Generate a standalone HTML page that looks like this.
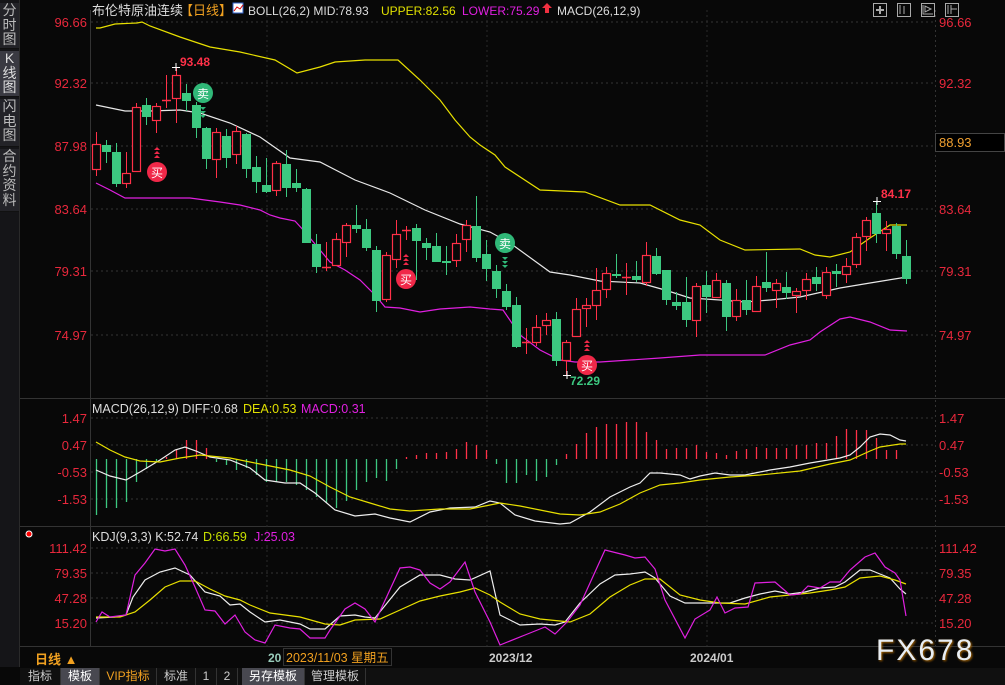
<!DOCTYPE html>
<html><head><meta charset="utf-8">
<style>
html,body{margin:0;padding:0;background:#080808;width:1005px;height:685px;overflow:hidden;font-family:"Liberation Sans","Noto Sans CJK SC",sans-serif}
svg{position:absolute;left:0;top:0}
.side{position:absolute;left:0;top:0;width:19px;height:667px;background:#151518;border-right:1px solid #2a2a2a}
.si{position:absolute;left:0;width:19px;color:#bbb;font-size:14px;line-height:14.5px;text-align:center;background:#232328;border-bottom:1px solid #111}
.tabs{position:absolute;left:20px;top:668px;width:985px;height:17px;background:#101010;font-size:12px;color:#ccc}
.tab{position:absolute;top:0;height:17px;line-height:17px;text-align:center;border-right:1px solid #333}
</style></head><body>
<div class="side">
<div class="si" style="top:3px;height:45px">分<br>时<br>图</div>
<div class="si" style="top:51px;height:45px;background:#3a3a42;color:#ddd">K<br>线<br>图</div>
<div class="si" style="top:99px;height:47px">闪<br>电<br>图</div>
<div class="si" style="top:149px;height:62px">合<br>约<br>资<br>料</div>
</div>
<svg id="s" width="1005" height="685" xmlns="http://www.w3.org/2000/svg"></svg>
<div class="tabs">
<div class="tab" style="left:0;width:40px">指标</div>
<div class="tab" style="left:41px;width:38px;background:#484850;color:#fff">模板</div>
<div class="tab" style="left:80px;width:56px;color:#f0a020">VIP指标</div>
<div class="tab" style="left:137px;width:38px">标准</div>
<div class="tab" style="left:176px;width:20px">1</div>
<div class="tab" style="left:197px;width:20px">2</div>
<div class="tab" style="left:222px;width:62px;background:#484850;color:#fff">另存模板</div>
<div class="tab" style="left:285px;width:60px">管理模板</div>
</div>
<script>
const s=document.getElementById('s');let h='';
function L(x1,y1,x2,y2,c,w,d){h+=`<line x1="${x1}" y1="${y1}" x2="${x2}" y2="${y2}" stroke="${c}" stroke-width="${w||1}" ${d?'stroke-dasharray="'+d+'"':''}/>`}
function T(x,y,t,c,sz,a,extra){h+=`<text x="${x}" y="${y}" fill="${c}" font-size="${sz||13}" ${a?'text-anchor="'+a+'"':''} ${extra||''}>${t}</text>`}
function P(pts,c){h+=`<polyline fill="none" stroke="${c}" stroke-width="1.2" points="${pts.join(' ')}"/>`}
L(20,398.5,1005,398.5,'#333',1);L(20,526.5,1005,526.5,'#333',1);L(20,646.5,1005,646.5,'#333',1);
L(90.5,10,90.5,646,'#333',1);L(935.5,10,935.5,646,'#333',1,'2,3');
[22,83,146,209,271,335].forEach(y=>L(91,y,935,y,'#333',1,'2,3'));
[418,445,472,499,548,573,598,623].forEach(y=>L(91,y,935,y,'#333',1,'2,3'));
[267,487,707].forEach(x=>L(x,10,x,646,'#2a2a2a',1,'2,3'));
const pl=[['96.66',22],['92.32',83],['87.98',146],['83.64',209],['79.31',271],['74.97',335]];
pl.forEach(p=>{T(87,p[1]+5,p[0],'#e8283c',13,'end');T(939,p[1]+5,p[0],'#e8283c',13)});
[['1.47',418],['0.47',445],['-0.53',472],['-1.53',499]].forEach(p=>{T(87,p[1]+5,p[0],'#e8283c',13,'end');T(939,p[1]+5,p[0],'#e8283c',13)});
[['111.42',548],['79.35',573],['47.28',598],['15.20',623]].forEach(p=>{T(87,p[1]+5,p[0],'#e8283c',13,'end');T(939,p[1]+5,p[0],'#e8283c',13)});
h+='<rect x="935.5" y="133.5" width="69" height="18" fill="#000" stroke="#444"/>';T(939,147,'88.93','#f0a030',13);
P(['96,105','125,111','150,111','180,110','200,113','230,123','260,137','290,158','320,162','355,180','390,193','425,210','460,224','490,232','510,243','550,272','570,275','600,281','640,283','665,290','690,298','720,300','745,302','770,300','800,297','840,288','870,283','907,277'],'#e8e8e8');
P(['96,28','100,28','115,24','137,23','142,22','150,26','180,37','210,47','240,52','275,60','297,73','320,67','335,62','365,60','398,60','420,80','440,100','455,120','470,137','480,145','495,155','505,167','540,190','585,192','620,205','650,205','680,220','700,225','720,240','745,250','800,249','815,255','830,257','850,252','870,238','890,225','907,225'],'#e8e000');
P(['96,183','110,190','125,198','150,198','190,198','205,200','220,202','240,205','260,210','270,215','280,218','295,221','305,232','320,250','330,262','345,270','360,280','375,295','385,307','400,308','420,312','440,309','470,307','490,309','503,310','520,335','540,350','560,360','575,362','600,362','630,360','660,358','700,355','765,355','790,345','810,340','820,332','840,319','850,317','870,322','890,330','907,331'],'#e020e0');
const C=[['r',144,169,132,176],['g',145,152,140,163],['g',152,184,143,187],['r',173,183,152,188],['r',107,171,103,171],['g',105,117,98,125],['r',106,120,103,133],['r',100,100,75,108],['r',75,98,67,123],['g',93,101,84,111],['g',105,128,102,138],['g',128,159,127,169],['r',132,159,128,178],['g',136,158,129,168],['r',131,154,126,164],['g',134,169,133,178],['g',167,182,156,193],['g',185,192,158,193],['r',163,190,161,196],['g',164,188,150,197],['g',183,188,169,192],['g',189,243,188,243],['g',244,267,234,273],['r',267,267,242,271],['r',239,265,233,265],['r',225,242,223,257],['g',225,229,205,233],['g',229,248,219,251],['g',250,301,246,312],['r',255,299,252,302],['r',234,259,220,268],['r',230,230,226,240],['g',228,241,224,280],['g',243,248,238,260],['g',246,262,233,262],['g',261,263,246,275],['r',243,260,234,267],['r',225,239,220,252],['g',226,258,196,262],['g',254,269,240,281],['g',271,289,265,298],['g',291,307,284,310],['g',305,347,297,348],['r',342,342,328,354],['r',327,342,315,346],['r',320,325,313,335],['g',319,361,312,366],['r',342,360,340,376],['r',309,336,298,337],['r',305,308,298,327],['r',290,305,268,320],['r',273,289,267,298],['g',274,276,254,278],['r',277,277,263,295],['g',276,280,261,282],['r',255,282,242,286],['g',256,274,248,275],['g',270,300,270,305],['g',302,306,292,310],['g',302,320,277,327],['r',286,320,283,337],['g',285,297,271,313],['r',280,297,273,298],['g',283,317,280,331],['r',300,316,289,321],['g',300,310,280,315],['r',286,311,276,311],['g',282,288,252,292],['r',283,290,279,308],['g',287,293,272,299],['r',291,295,288,313],['r',279,290,273,300],['g',277,284,267,291],['r',272,295,267,299],['g',271,274,264,287],['r',266,274,258,283],['r',237,264,233,268],['r',220,236,217,251],['g',213,234,202,243],['r',229,233,221,251],['g',226,254,223,259],['g',256,279,240,284]];
C.forEach((c,i)=>{const x=96+i*10.0;const col=c[0]=='r'?'#ff3048':'#3cc880';
 L(x+.5,c[3],x+.5,c[4],col,1);
 let bh=Math.max(1,c[2]-c[1]);
 if(c[0]=='r'){ if(c[2]-c[1]<2) L(x-4,c[1]+.5,x+5,c[1]+.5,col,1.5); else h+=`<rect x="${x-3.5}" y="${c[1]+.5}" width="8" height="${bh}" fill="#080808" stroke="${col}" stroke-width="1.2"/>`;}
 else h+=`<rect x="${x-4}" y="${c[1]}" width="9" height="${Math.max(2,bh)}" fill="${col}"/>`;
});
function M(x,y,t,col,up){h+=`<circle cx="${x}" cy="${y}" r="10" fill="${col}"/>`;T(x,y+5,t,'#fff',12,'middle');
 for(let k=0;k<3;k++){const yy=up?y-14-k*4:y+14+k*4;h+=up?`<path d="M${x-3} ${yy} L${x+3} ${yy} L${x} ${yy-3}Z" fill="${col}"/>`:`<path d="M${x-3} ${yy} L${x+3} ${yy} L${x} ${yy+3}Z" fill="${col}"/>`}}
M(203,93,'卖','#30b878',false);M(157,172,'买','#f02848',true);M(406,279,'买','#f02848',true);M(505,243,'卖','#30b878',false);M(587,365,'买','#f02848',true);
T(180,66,'93.48','#ff3048',12,null,'font-weight="bold"');T(881,198,'84.17','#ff3048',12,null,'font-weight="bold"');T(570,385,'72.29','#3cc880',12,null,'font-weight="bold"');
L(172,67.5,180,67.5,'#fff');L(176,63,176,71,'#fff');L(873,201.5,881,201.5,'#fff');L(877,197,877,205,'#fff');L(563,375.5,571,375.5,'#fff');L(567,371,567,379,'#fff');
const mh=[515,508,508,502,482,469,462,457,449,440,440,448,462,465,470,468,475,482,482,482,485,490,497,503,508,501,490,482,478,481,469,457,455,453,453,452,449,442,445,450,464,483,483,475,481,477,465,454,444,433,427,424,424,422,422,432,440,449,448,448,445,452,453,455,451,449,447,448,448,448,445,445,443,443,436,429,430,430,438,450,450];
mh.forEach((v,i)=>{const x=96+i*10+.5;L(x,459,x,v,v<459?'#ff3048':'#3cc880',1.3)});
P(['96,470','110,476','126,480','140,472','160,460','175,450','185,447','196,451','210,457','230,460','250,468','265,480','285,483','300,483','315,493','335,510','355,516','375,514','390,518','410,522','430,512','450,508','475,507','490,501','500,503','515,515','535,521','560,524','570,523','590,512','610,497','630,487','640,483','650,473','660,473','680,475','690,479','700,476','715,473','730,475','745,475','770,470','790,467','810,463','840,458','850,455','860,447','870,437','880,434','890,435','900,440','906,441'],'#eee');
P(['96,442','110,450','125,457','140,461','160,462','180,458','200,455','230,458','260,464','290,470','310,476','330,487','350,497','370,503','390,509','410,511','440,509','470,509','500,503','520,506','540,510','560,514','580,515','600,512','620,504','640,493','660,485','680,483','700,480','730,477','760,475','800,471','830,464','850,460','870,451','880,447','900,444','906,444'],'#e8e000');
P(['96,618','115,617','126,615','133,597','145,580','160,572','175,568','190,575','205,592','220,596','230,605','240,604','250,612','265,622','280,620','300,624','310,629','325,629','340,616','355,615','365,617','375,618','400,587','420,575','440,575','455,579','470,580','490,571','500,615','520,625','540,624','555,625','565,622','580,603','600,584','615,575','630,574','645,572','655,578','670,596','685,603','700,603','730,603','745,598','760,594','775,591','790,594','805,592','820,588','835,587','845,582','860,570','870,570','880,574','890,578','900,589','906,594'],'#eee');
P(['96,617','120,617','135,612','150,600','165,587','180,581','195,581','210,589','225,596','240,600','250,605','270,613','300,617','325,624','340,625','355,620','380,619','400,610','420,601','440,596','460,592','475,588','490,595','500,602','520,614','540,619','560,621','570,622','590,614','610,597','630,585','645,579','660,579','680,595','700,600','720,603','745,604','770,597','790,595','810,593','830,590','845,587','860,578','880,576','895,580','906,584'],'#e8e000');
P(['96,622','102,612','110,617','126,615','135,575','145,563','155,549','165,551','175,549','185,565','195,587','205,610','215,611','225,624','235,615','245,632','255,640','265,643','275,625','290,628','300,629','310,638','325,638','330,630','345,609','355,603','365,609','375,622','400,568','410,567','420,570','430,583','440,589','450,582','465,562','475,592','490,622','500,645','525,635','545,627','555,634','567,622','580,605','590,583','605,550','625,555','635,558','645,557','655,569','665,600','685,638','695,619','710,610','717,597','725,613','735,608','748,607','755,583','775,582','790,595','800,594','808,586','820,588','830,582','840,582','850,570','865,557','875,553','885,567','895,573','900,580','906,616'],'#e020e0');
T(92,15,'布伦特原油连续','#ddd',13);T(180,15,'【日线】','#f0a020',13);
h+='<rect x="233" y="3" width="10" height="10" fill="#fff" stroke="#36c" /><path d="M234 11 L237 7 L240 9 L243 5" stroke="#d00" fill="none"/>';
T(248,15,'BOLL(26,2) MID:78.93','#ddd',12);T(381,15,'UPPER:82.56','#e0e000',12);T(462,15,'LOWER:75.29','#e020e0',12);
h+='<path d="M547 3 L552 8 L549 8 L549 13 L545 13 L545 8 L542 8Z" fill="#f03040"/>';
T(557,15,'MACD(26,12,9)','#ddd',12);
T(92,413,'MACD(26,12,9) DIFF:0.68','#ddd',12.5);T(243,413,'DEA:0.53','#e0e000',12.5);T(301,413,'MACD:0.31','#e020e0',12.5);
T(92,541,'KDJ(9,3,3) K:52.74','#ddd',12.5);T(203,541,'D:66.59','#c8e000',12.5);T(254,541,'J:25.03','#e020e0',12.5);
h+='<circle cx="29" cy="534" r="3" fill="#f00" stroke="#fff" stroke-width="1"/>';
[[873,3],[897,3],[921,3],[945,3]].forEach(p=>h+=`<rect x="${p[0]}.5" y="${p[1]}.5" width="13" height="13" fill="none" stroke="#aaa"/>`);
L(876,10,884,10,'#aaa',2);L(880,6,880,14,'#aaa',2);L(900,5,900,14,'#aaa');L(904,6,904,14,'#aaa');h+='<path d="M923 5 L923 14 L933 14 M925 6 L925 12 L931 9Z" fill="none" stroke="#aaa"/><path d="M948 5 L948 14 M951 5 L951 14 M951 9 L957 9" stroke="#aaa" fill="none"/>';
T(35,664,'日线 ▲','#f0a020',13,null,'font-weight="bold"');
T(268,662,'20','#9cb',12,null,'font-weight="bold"');
h+='<rect x="283.5" y="648.5" width="108" height="17" fill="#080808" stroke="#333"/>';T(286,662,'2023/11/03 星期五','#f0a020',12.5);
T(489,662,'2023/12','#ccc',12,null,'font-weight="bold"');T(690,662,'2024/01','#ccc',12,null,'font-weight="bold"');
T(876,660,'FX678','#e8eef4',30,null,'letter-spacing="2" style="text-shadow:1px 1px 2px #a60"');
s.innerHTML=h;
</script>
</body></html>
